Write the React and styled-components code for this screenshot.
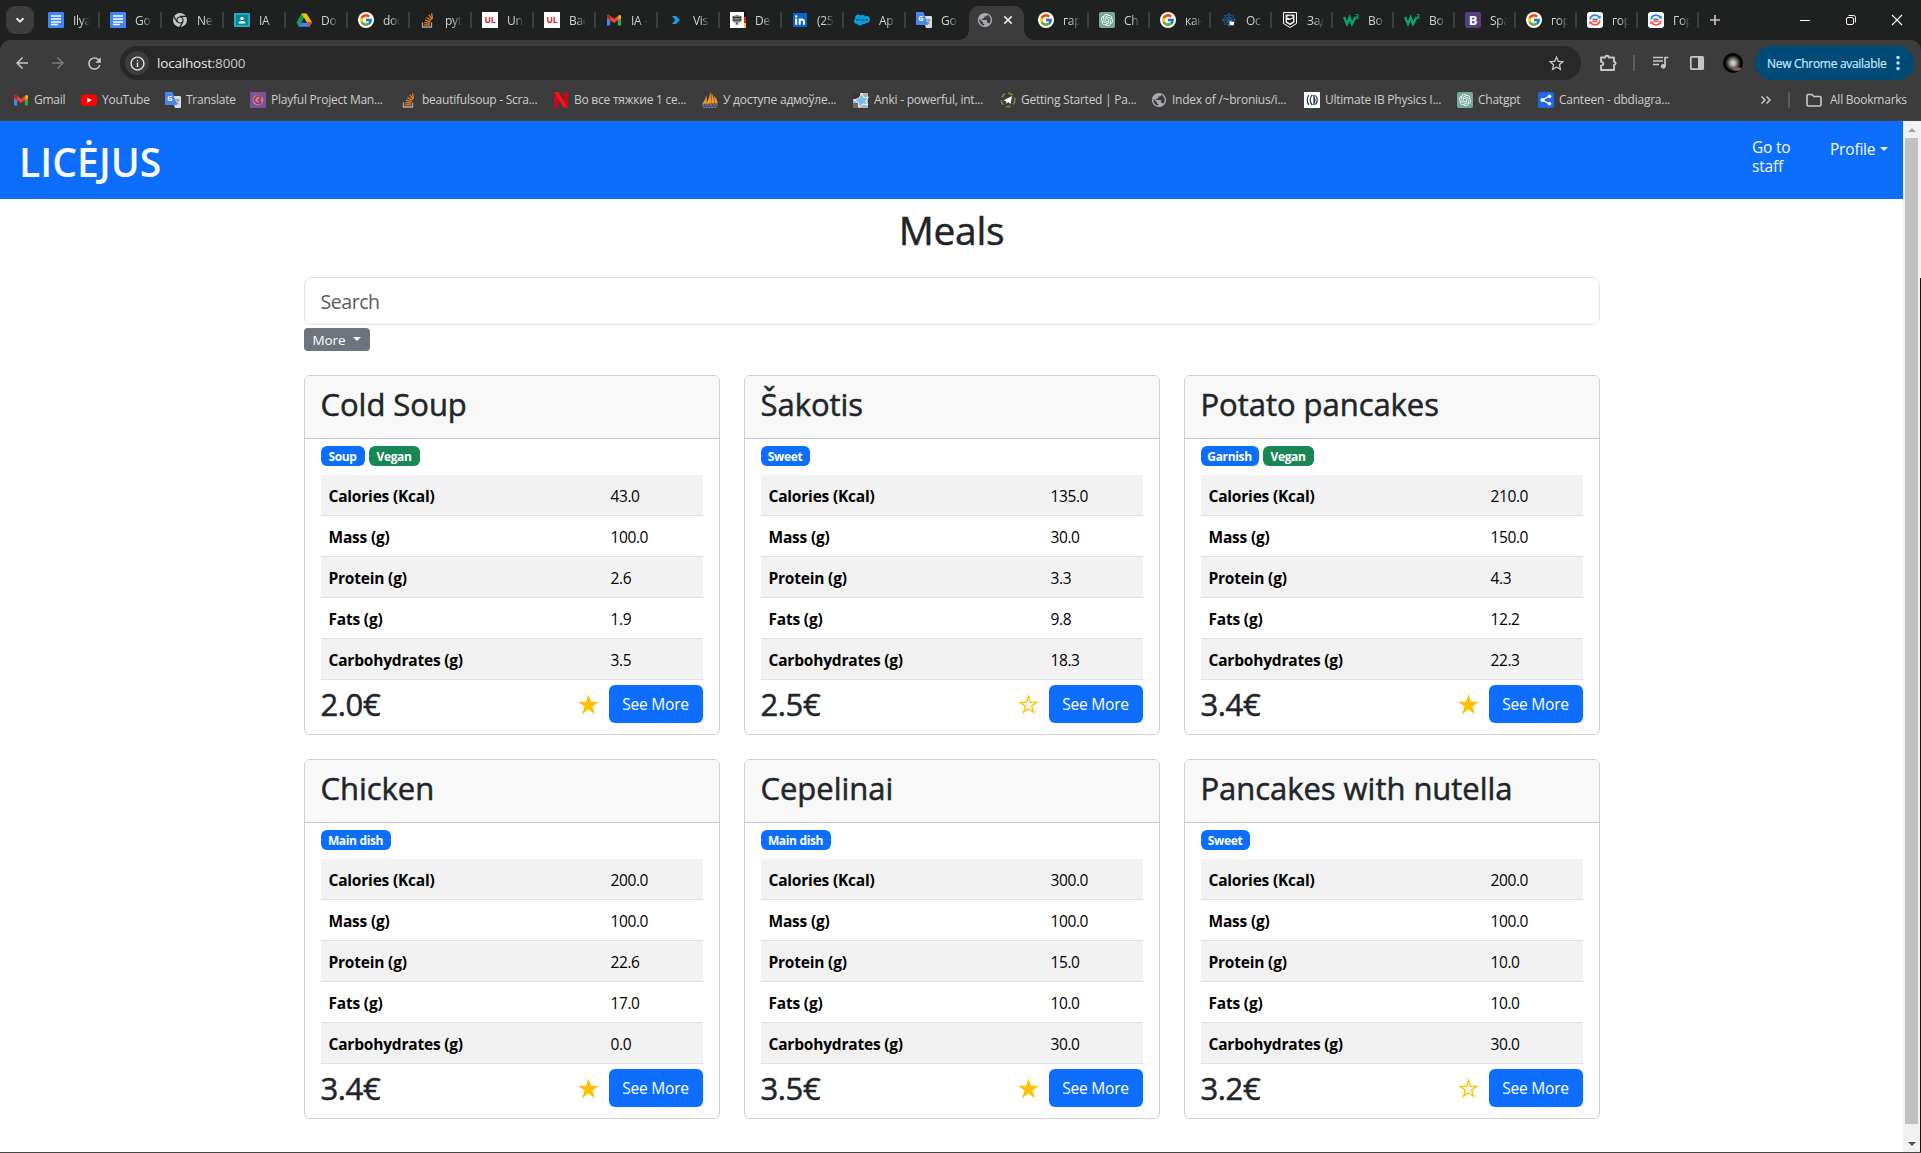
import React from "react";
import styled, { createGlobalStyle } from "styled-components";
import { FcGoogle } from "react-icons/fc";
import { FaSalesforce } from "react-icons/fa";
import {
  MdArrowBack, MdArrowForward, MdRefresh, MdInfoOutline, MdStarBorder, MdPublic,
} from "react-icons/md";
import { SiOpenai } from "react-icons/si";

const FONT = `"Segoe UI", "Open Sans", "Noto Sans", sans-serif`;
const BLUE = "#0d6efd";

const GlobalStyle = createGlobalStyle`
  * { box-sizing: border-box; }
  body { margin: 0; overflow: hidden; background: #fff; font-family: ${FONT}; }
  h1, h2, h3 { margin: 0; font-weight: 500; -webkit-text-stroke: 0.5px currentColor; }
  svg { display: block; flex: none; }
`;

/* ---------- browser window ---------- */

const Window = styled.div`
  width: 1921px;
  height: 1153px;
  display: flex;
  flex-direction: column;
  overflow: hidden;
  background: #1f2020;
`;

const TabStrip = styled.div`
  height: 40px;
  flex: none;
  display: flex;
  align-items: center;
  padding: 0 1px 0 6px;
  background: #1f2120;
`;

const TabSearch = styled.div`
  width: 28px;
  height: 28px;
  margin-right: 4px;
  border-radius: 9px;
  background: #3c3c3c;
  color: #e3e3e3;
  display: flex;
  align-items: center;
  justify-content: center;
`;

const TabItem = styled.div`
  width: ${(p) => p.$w}px;
  flex: none;
  height: 28px;
  padding-left: 10px;
  display: flex;
  align-items: center;
  justify-content: space-between;
`;

const TabLabel = styled.span`
  width: 17px;
  margin: 2px auto 0 9px;
  overflow: hidden;
  white-space: nowrap;
  font-size: 12px;
  line-height: 18px;
  letter-spacing: -0.3px;
  color: #d0d2d1;
  mask-image: linear-gradient(90deg, #000 45%, transparent 100%);
`;

const TabDivider = styled.i`
  width: 2px;
  height: 16px;
  background: ${(p) => (p.$hidden ? "transparent" : "#3d3e3e")};
`;

const ActiveTab = styled.div`
  position: relative;
  width: 55px;
  height: 34px;
  margin: 6px 4px 0 1px;
  flex: none;
  border-radius: 10px 10px 0 0;
  background: #3c3c3c;
  display: flex;
  align-items: center;
  padding: 0 0 6px 8px;
  gap: 9px;
  &::before, &::after {
    content: "";
    position: absolute;
    bottom: 0;
    width: 10px;
    height: 10px;
  }
  &::before { left: -10px; background: radial-gradient(circle at 0 0, transparent 9.5px, #3c3c3c 10px); }
  &::after { right: -10px; background: radial-gradient(circle at 100% 0, transparent 9.5px, #3c3c3c 10px); }
`;

const NewTab = styled.div`
  width: 32px;
  display: flex;
  justify-content: center;
`;

const WindowControls = styled.div`
  margin-left: auto;
  display: flex;
  > div { width: 46px; display: flex; justify-content: center; }
`;

const ToolbarFrame = styled.div`
  flex: none;
  height: 81px;
  border-radius: 10px 10px 0 0;
  border-bottom: 1px solid #474747;
  background: #3c3c3c;
`;

const Toolbar = styled.div`
  height: 46px;
  display: flex;
  align-items: center;
  padding-left: 4px;
`;

const ToolSlot = styled.div`
  width: 36px;
  height: 36px;
  flex: none;
  display: flex;
  align-items: center;
  justify-content: center;
  color: ${(p) => (p.$dim ? "#7b7b7b" : "#c7c7c7")};
`;

const Omnibox = styled.div`
  width: 1461px;
  height: 34px;
  flex: none;
  margin: 0 9px 0 8px;
  padding: 0 15px 0 5px;
  border-radius: 17px;
  background: #282828;
  display: flex;
  align-items: center;
`;

const SiteInfo = styled.div`
  width: 24px;
  height: 24px;
  border-radius: 50%;
  background: #3c3c3c;
  color: #e3e3e3;
  display: flex;
  align-items: center;
  justify-content: center;
`;

const Address = styled.div`
  margin: 0 auto 1px 8px;
  font-size: 13.5px;
  letter-spacing: -0.2px;
  color: #e8e8e8;
  span { color: #c7c7c7; }
`;

const VRule = styled.i`
  width: 2px;
  height: 16px;
  flex: none;
  margin: ${(p) => p.$m || 0};
  background: #5c5c5c;
`;

const Avatar = styled.div`
  width: 20px;
  height: 20px;
  border-radius: 50%;
  background:
    radial-gradient(ellipse 6px 2.5px at 14px 16px, #8d5f5c 50%, transparent 100%),
    radial-gradient(circle at 50% 50%, #c9c7bb 12%, #77756b 30%, #050505 55%);
`;

const UpdateButton = styled.div`
  width: 159px;
  height: 34px;
  margin-left: 4px;
  padding: 0 14px 0 12px;
  border-radius: 17px;
  background: #004a77;
  color: #c2e7ff;
  display: flex;
  align-items: center;
  justify-content: space-between;
  font-size: 12px;
  letter-spacing: -0.3px;
  white-space: nowrap;
  -webkit-text-stroke: 0.2px currentColor;
`;

const BookmarkBar = styled.div`
  height: 34px;
  display: flex;
  align-items: center;
  padding: 0 14px 6px 13px;
  color: #cdcdcd;
`;

const BookmarkItem = styled.div`
  width: ${(p) => p.$w}px;
  flex: none;
  display: flex;
  align-items: center;
  gap: 5px;
`;

const BookmarkLabel = styled.span`
  font-size: 12px;
  line-height: 18px;
  letter-spacing: -0.24px;
  white-space: nowrap;
`;

const BookmarkEnd = styled.div`
  margin-left: auto;
  display: flex;
  align-items: center;
`;

const AllBookmarks = styled(BookmarkLabel)`
  width: 77px;
  margin-left: 8px;
`;

/* ---------- page ---------- */

const Viewport = styled.div`
  flex: none;
  height: 1032px;
  display: flex;
  background: #fff;
  border-bottom: 1px solid #474747;
`;

const Page = styled.div`
  width: 1903px;
  flex: none;
`;

const ScrollTrack = styled.div`
  width: 17px;
  display: flex;
  flex-direction: column;
  align-items: center;
  background: #f1f1f1;
`;

const ScrollArrow = styled.div`
  height: 17px;
  display: flex;
  align-items: center;
  &::before {
    content: "";
    border: 4px solid transparent;
    border-${(p) => (p.$down ? "top" : "bottom")}-color: ${(p) => (p.$down ? "#505050" : "#a3a3a3")};
    border-${(p) => (p.$down ? "bottom" : "top")}-width: 0;
  }
`;

const ScrollThumb = styled.div`
  width: 13px;
  height: 986px;
  margin-bottom: auto;
  background: #c1c1c1;
`;

const WindowEdge = styled.div`
  width: 1px;
  background: linear-gradient(#f1f1f1 157px, #141414 157px);
`;

const NavBar = styled.nav`
  height: 78px;
  padding: 0 17px 0 19px;
  display: flex;
  align-items: flex-start;
  background: ${BLUE};
  color: #f8f9fa;
`;

const Brand = styled.div`
  margin: 10px auto 0 0;
  font-size: 39px;
  line-height: 61px;
  font-weight: 600;
  letter-spacing: 0.1px;
`;

const NavLink = styled.div`
  width: ${(p) => p.$w}px;
  padding-top: ${(p) => p.$top}px;
  display: flex;
  align-items: center;
  gap: 5px;
  font-size: 15.5px;
  line-height: 19px;
  letter-spacing: -0.2px;
`;

const Caret = styled.i`
  margin-bottom: 1px;
  border-top: 4px solid;
  border-left: 4px solid transparent;
  border-right: 4px solid transparent;
`;

const Container = styled.main`
  width: 1296px;
  margin: 0 auto;
`;

const PageTitle = styled.h1`
  padding-top: 7px;
  height: 78px;
  font-size: 39px;
  line-height: 48px;
  letter-spacing: -0.3px;
  color: #212529;
  text-align: center;
`;

const SearchBox = styled.div`
  height: 48px;
  padding: 0 16px;
  border: 1px solid #dee2e6;
  border-radius: 8px;
  font-size: 19.5px;
  line-height: 47px;
  letter-spacing: -0.45px;
  color: #595c5f;
`;

const MoreButton = styled.div`
  width: 66px;
  height: 23px;
  margin: 3px 0 24px;
  padding: 0 9px;
  border-radius: 4px;
  background: #6c757d;
  color: #fff;
  display: flex;
  align-items: center;
  justify-content: space-between;
  font-size: 13.5px;
  letter-spacing: -0.1px;
`;

const CardGrid = styled.div`
  display: grid;
  grid-template-columns: repeat(3, 416px);
  gap: 24px;
`;

const Card = styled.article`
  height: 360px;
  border: 1px solid #d0d1d2;
  border-radius: 6px;
  overflow: hidden;
`;

const CardHeader = styled.header`
  height: 63px;
  padding: 8px 16px;
  border-bottom: 1px solid #c8c9ca;
  background: #f8f8f8;
`;

const CardTitle = styled.h2`
  font-size: 31px;
  line-height: 40px;
  letter-spacing: -0.04px;
  color: #212529;
  white-space: nowrap;
`;

const CardBody = styled.div`
  padding: 7px 16px 0;
`;

const Badges = styled.div`
  display: flex;
  gap: 4px;
`;

const Badge = styled.span`
  height: 20px;
  width: ${(p) => p.$w}px;
  text-align: center;
  border-radius: 6px;
  background: ${(p) => (p.$green ? "#198754" : BLUE)};
  color: #fff;
  font-size: 12px;
  line-height: 21px;
  font-weight: 700;
  letter-spacing: -0.35px;
`;

const Facts = styled.div`
  margin-top: 9px;
`;

const FactRow = styled.div`
  height: 41px;
  padding: 0 8px;
  display: grid;
  grid-template-columns: 282px 1fr;
  border-bottom: 1px solid #dee2e6;
  background: ${(p) => (p.$striped ? "#f2f2f2" : "#fff")};
  font-size: 15.5px;
  line-height: 42px;
  letter-spacing: -0.4px;
  color: #000;
  b { font-weight: 700; letter-spacing: -0.2px; }
`;

const CardFooter = styled.footer`
  height: 48px;
  display: flex;
  align-items: center;
`;

const Price = styled.h3`
  margin: 1px auto 0 0;
  font-size: 31px;
  line-height: 39px;
  letter-spacing: -0.4px;
  color: #212529;
`;

const SeeMore = styled.div`
  width: 94px;
  height: 38px;
  margin-left: 10px;
  border-radius: 6px;
  background: ${BLUE};
  color: #fff;
  font-size: 15.5px;
  line-height: 39px;
  letter-spacing: -0.2px;
  text-align: center;
`;

/* ---------- drawings ---------- */

const Svg = ({ size = 16, children, ...rest }) => (
  <svg width={size} height={size} viewBox="0 0 16 16" fill="none" {...rest}>{children}</svg>
);

const LogoText = styled.text`
  font-family: ${FONT};
  font-weight: 700;
  text-anchor: middle;
`;

const Docs = () => (
  <Svg><rect width="16" height="16" rx="1.2" fill="#4285f4" /><path d="M3 4h10M3 7h10M3 10h10M3 12.6h7" stroke="#fff" strokeWidth="1.5" /></Svg>
);
const ChromeGrey = () => (
  <Svg><circle cx="8" cy="8" r="7" fill="#c4c7c5" /><path d="M8 4.400h7M4.900 9.800 1.600 4M11.100 9.800 7.600 15.400" stroke="#1f2120" strokeWidth="1.200" /><circle cx="8" cy="8" r="3.600" fill="#1f2120" /><circle cx="8" cy="8" r="2.500" fill="#c4c7c5" /></Svg>
);
const Classroom = () => (
  <Svg><rect y="1" width="16" height="14" rx="1" fill="#14b1c7" /><rect x="2" y="3" width="12" height="10" fill="#0b8499" /><circle cx="8" cy="6.400" r="1.700" fill="#fff" /><path d="M4.500 11.500c0-2 1.600-2.600 3.500-2.600s3.500.6 3.500 2.600z" fill="#fff" /></Svg>
);
const Drive = () => (
  <Svg><path d="M5.400 1.500h5.200L5.300 10.700 2.700 15 .6 10.500z" fill="#0f9d58" /><path d="M5.400 1.500h5.200L16 10.500h-5.200z" fill="#fbbc04" /><path d="M5.300 10.500H16L13.400 14.800H2.700z" fill="#4285f4" /><path d="M10.800 10.500H16L13.400 14.800z" fill="#ea4335" /><path d="m8 6 2.700 4.500H5.300z" fill="#1f2120" /></Svg>
);
const GoogleIcon = () => (
  <Svg><circle cx="8" cy="8" r="8" fill="#fff" /><FcGoogle x="1" y="1" size={14} /></Svg>
);
const StackIcon = () => (
  <Svg><path d="M2.500 10.500v4.500h9v-4.500" stroke="#a5a8aa" strokeWidth="1.300" /><path d="M4.200 12.900h5.700M4.300 10.600l5.700.6M5 8.100l5.400 1.600M6.500 5.400l4.700 2.900M8.900 2.800l3.200 4.600M11.600 1.300l.9 5.400" stroke="#f48024" strokeWidth="1.200" /></Svg>
);
const UL = () => (
  <Svg><rect width="16" height="16" fill="#fff" /><LogoText x="8" y="11" fontSize="8.500" fill="#d8232a">UL</LogoText></Svg>
);
const Gmail = () => (
  <Svg><path d="M1 4v9.500h3.200V7z" fill="#4285f4" /><path d="M15 4v9.500h-3.200V7z" fill="#34a853" /><path d="M11.800 4.500 13.300 3Q15 2.600 15 4.500v1.300l-3.200 2.500z" fill="#fbbc04" /><path d="M1 5.800V4.200Q1.200 2.300 3 3l5 3.800L13 3l-1.200 5.300L8 11 4.200 8.300z" fill="#ea4335" /><path d="M1 5.800V4.500Q1 2.700 2.700 2.900L4.200 4v4.300z" fill="#c5221f" /></Svg>
);
const BlueChevron = () => (
  <Svg><path d="M4 4h4l4 4-4 4H4l3.400-4z" fill="#11a4e8" /></Svg>
);
const Eagle = () => (
  <Svg><rect width="16" height="16" fill="#fff" /><path d="M7 3v9M3.200 4v5.500M5 3.500v7M9 3.500v7M10.800 4v5.500" stroke="#333" strokeWidth="1.200" /><path d="M3 5.500h8M3 8h8M5.500 12h3" stroke="#333" strokeWidth="1" /><path d="M14 0h2v5h-2z" fill="#111" /><path d="M14 5h2v6h-2z" fill="#e02020" /><path d="M14 11h2v5h-2z" fill="#f8ce1c" /></Svg>
);
const LinkedIn = () => (
  <Svg><rect x="1" y="1" width="14" height="14" rx="1" fill="#0a66c2" /><circle cx="4.200" cy="4.400" r="1.200" fill="#fff" /><path d="M4.200 6.500v6.300M7.700 6.500v6.300M7.700 9.500c0-2.800 4.200-2.800 4.200 0v3.300" stroke="#fff" strokeWidth="2" /></Svg>
);
const Translate = () => (
  <Svg><path d="M6 4h9q1 0 1 1v10q0 1-1 1h-5z" fill="#dadce0" /><path d="M9.500 8h5M12 6.800V8M13.500 8c-.5 2-2 3.500-3.500 4M10.800 9.500c.6 1.200 1.800 2 3 2.600" stroke="#6b7f99" strokeWidth=".9" /><path d="M1 0h6.500L12 13H1q-1 0-1-1V1q0-1 1-1z" fill="#4a86f0" /><LogoText x="4.700" y="9" fontSize="7" fill="#fff">G</LogoText></Svg>
);
const Globe = () => (
  <Svg><MdPublic x="-0.500" y="-0.500" size={17} color="#a4a9ae" /></Svg>
);
const Gpt = () => (
  <Svg><rect width="16" height="16" rx="2" fill="#75a99c" /><SiOpenai x="2" y="2" size={12} color="#fff" /></Svg>
);
const Web = () => (
  <Svg stroke="#1d5d93"><circle cx="8" cy="8" r="5.300" /><circle cx="8" cy="8" r="2.600" /><path d="M8 .5v15M.5 8h15M2.700 2.700l10.600 10.600M13.300 2.700 2.700 13.300" /><path d="M8.500 9l5 1-1 3.500-4-.5z" fill="#fff" stroke="none" /></Svg>
);
const Shield = () => (
  <Svg><path d="M1.500.5h13v11L8 15.500l-6.500-4z" fill="#1f2120" stroke="#fff" /><path d="M3.500 2.500h9v8L8 13.300l-4.500-2.800z" fill="#e8e8e8" /><path d="M4.500 5 8 3.500 11.500 5 8 6.500zM8 8l3-1.500v3L8 11.300 5 9.500V8" fill="#1f2120" /></Svg>
);
const W3 = () => (
  <Svg><path d="m1 5 3 7 2.600-6.500L9 12l3.600-7" stroke="#04aa6d" strokeWidth="2.300" /><LogoText x="14" y="6.500" fontSize="6.500" fill="#04aa6d">3</LogoText></Svg>
);
const Bootstrap = () => (
  <Svg><rect width="16" height="16" rx="2" fill="#563d7c" /><LogoText x="8" y="12.500" fontSize="13" fill="#fff">B</LogoText></Svg>
);
const Reverso = () => (
  <Svg><rect width="16" height="16" rx="3" fill="#fff" /><path d="M3 7.500Q4 3.200 8 3.200q3 0 4.300 2.300M5.500 7.300h5" stroke="#2b87e3" strokeWidth="1.800" /><path d="M13 8.500q-1 4.300-5 4.300-3 0-4.300-2.300M5.500 9.400h5" stroke="#ef5a4c" strokeWidth="1.800" /><path d="m10.500 6.200 3.500.6-.4-3.600z" fill="#2b87e3" /><path d="m5.500 9.800-3.500-.6.400 3.600z" fill="#ef5a4c" /></Svg>
);
const YouTube = () => (
  <Svg><rect x="0" y="2.500" width="16" height="11.500" rx="3" fill="#f00" /><path d="m6.300 5.800 4.500 2.500-4.500 2.500z" fill="#fff" /></Svg>
);
const Playful = () => (
  <Svg><rect width="16" height="16" fill="#7a52a0" /><circle cx="8" cy="8" r="5.300" fill="#7aaec0" /><path d="M11.500 5.500Q8 2.500 5.500 5.500t.6 5q2.500 2 5.400-.3M8 8l3.500-2M8 8l3.500 2" stroke="#e4213f" strokeWidth="1.900" /></Svg>
);
const Netflix = () => (
  <Svg><path d="M1 0h4.500v15.500L1 16zM10.500 0H15v16l-4.500-.5z" fill="#c4091a" /><path d="M1 0h4.500L15 16l-4.500-.5z" fill="#f5121d" /></Svg>
);
const Ship = () => (
  <Svg><path d="M4.500 3Q3.500 8 0 12l5-.5zM8.500 0Q7 7 4.500 11.700l5-.2zM9.500 1q3 5 2.500 10.500H9.700zM12 4q4 4 3.500 7.500H12.500z" fill="#f0962c" /><path d="M0 13h16M1 15.200h14" stroke="#7d78a8" strokeWidth="1.500" strokeDasharray="2 .7" /></Svg>
);
const Anki = () => (
  <Svg><path d="M0 1h15v15H0z" fill="#aeb4b8" /><path d="M0 1h7v6H0z" fill="#343638" /><path d="M0 11h5v5H0z" fill="#6b6e70" /><path d="m9 1 1.500 4.500L15.500 5l-3 4 2.500 4-5-1L6 15l-.5-4.500L1 8l5-2z" fill="#77bdf0" stroke="#fff" strokeWidth=".8" /></Svg>
);
const Plane = () => (
  <Svg><circle cx="8" cy="8" r="6.800" stroke="#9a7d32" strokeWidth="1.500" strokeDasharray="5 3" /><circle cx="8" cy="8" r="6.800" stroke="#4c8b4f" strokeWidth="1.500" strokeDasharray="2 6" /><path d="m3.500 8.500 8.500-4.500-1.500 8-2.500-2-1.500 2-.3-2.700z" fill="#fff" /></Svg>
);
const Physics = () => (
  <Svg><rect width="16" height="16" fill="#fff" /><path d="M5 3Q1.500 8 5 13M8 3Q4.500 8 8 13M9 3q4 5 0 10M11.500 3.500q3.500 4.500 0 9M10 3v10" stroke="#26364f" strokeWidth="1.200" /></Svg>
);
const DbDiagram = () => (
  <Svg><rect width="16" height="16" rx="2.500" fill="#2368e0" /><path d="M11.500 4 4.500 8l7 4" stroke="#fff" strokeWidth="1.300" /><circle cx="4.500" cy="8" r="2" fill="#fff" /><circle cx="11.500" cy="4.200" r="1.800" fill="#fff" /><circle cx="11.500" cy="11.800" r="1.800" fill="#fff" /></Svg>
);
const Cloud = () => <FaSalesforce size={16} color="#00a1e0" />;

const STAR = "M10.500 0 13 7.700H21L14.500 12.400 17 20.200 10.500 15.400 4 20.200 6.500 12.400 0 7.700H8Z";
const Star = ({ filled }) => (
  <svg width="21" height="21" viewBox="0 0 21 21">
    {filled
      ? <path d={STAR} fill="#ffc107" />
      : <path d="M10.500 2.200 12.400 8.400H18.900L13.700 12.100 15.700 18.400 10.500 14.500 5.300 18.400 7.300 12.100 2.100 8.400H8.600Z" fill="none" stroke="#ffc107" strokeWidth="1.350" />}
  </svg>
);

/* ---------- data ---------- */

const LEFT_TABS = [
  [Docs, "Ilya"], [Docs, "Go"], [ChromeGrey, "Ne"], [Classroom, "IA"], [Drive, "Do"],
  [GoogleIcon, "doc"], [StackIcon, "pyt"], [UL, "Un"], [UL, "Bac"], [Gmail, "IA -"],
  [BlueChevron, "Vis"], [Eagle, "De"], [LinkedIn, "(25"], [Cloud, "Ap"], [Translate, "Go"],
];

const RIGHT_TABS = [
  [GoogleIcon, "гар"], [Gpt, "Ch"], [GoogleIcon, "кан"], [Web, "Ос"], [Shield, "Зад"],
  [W3, "Bo"], [W3, "Bo"], [Bootstrap, "Spa"], [GoogleIcon, "гор"], [Reverso, "гор"], [Reverso, "Гор"],
];

const BOOKMARKS = [
  [Gmail, "Gmail", 68], [YouTube, "YouTube", 84], [Translate, "Translate", 85],
  [Playful, "Playful Project Man...", 151], [StackIcon, "beautifulsoup - Scra...", 152],
  [Netflix, "Во все тяжкие 1 се...", 149], [Ship, "У доступе адмоўле...", 151],
  [Anki, "Anki - powerful, int...", 147], [Plane, "Getting Started | Pa...", 151],
  [Globe, "Index of /~bronius/i...", 153], [Physics, "Ultimate IB Physics I...", 153],
  [Gpt, "Chatgpt", 81], [DbDiagram, "Canteen - dbdiagra...", 140],
];

const FACT_LABELS = ["Calories (Kcal)", "Mass (g)", "Protein (g)", "Fats (g)", "Carbohydrates (g)"];
const TAG_WIDTHS = { Soup: 44, Vegan: 51, Sweet: 49, Garnish: 58, "Main dish": 70 };

const MEALS = [
  { name: "Cold Soup", tags: ["Soup", "Vegan"], facts: ["43.0", "100.0", "2.6", "1.9", "3.5"], price: "2.0€", starred: true },
  { name: "Šakotis", tags: ["Sweet"], facts: ["135.0", "30.0", "3.3", "9.8", "18.3"], price: "2.5€", starred: false },
  { name: "Potato pancakes", tags: ["Garnish", "Vegan"], facts: ["210.0", "150.0", "4.3", "12.2", "22.3"], price: "3.4€", starred: true },
  { name: "Chicken", tags: ["Main dish"], facts: ["200.0", "100.0", "22.6", "17.0", "0.0"], price: "3.4€", starred: true },
  { name: "Cepelinai", tags: ["Main dish"], facts: ["300.0", "100.0", "15.0", "10.0", "30.0"], price: "3.5€", starred: true },
  { name: "Pancakes with nutella", tags: ["Sweet"], facts: ["200.0", "100.0", "10.0", "10.0", "30.0"], price: "3.2€", starred: false },
];

/* ---------- components ---------- */

const Tab = ({ icon: Icon, label, width, last }) => (
  <TabItem $w={width}>
    <Icon />
    <TabLabel>{label}</TabLabel>
    <TabDivider $hidden={last} />
  </TabItem>
);

const MealCard = ({ meal }) => (
  <Card>
    <CardHeader><CardTitle>{meal.name}</CardTitle></CardHeader>
    <CardBody>
      <Badges>
        {meal.tags.map((t) => <Badge key={t} $w={TAG_WIDTHS[t]} $green={t === "Vegan"}>{t}</Badge>)}
      </Badges>
      <Facts>
        {FACT_LABELS.map((label, i) => (
          <FactRow key={label} $striped={i % 2 === 0}><b>{label}</b><span>{meal.facts[i]}</span></FactRow>
        ))}
      </Facts>
      <CardFooter>
        <Price>{meal.price}</Price>
        <Star filled={meal.starred} />
        <SeeMore>See More</SeeMore>
      </CardFooter>
    </CardBody>
  </Card>
);

export default function App() {
  return (
    <Window>
      <GlobalStyle />
      <TabStrip>
        <TabSearch><Svg><path d="m4.500 6.200 3.500 3.500 3.500-3.500" stroke="#e3e3e3" strokeWidth="2" /></Svg></TabSearch>
        {LEFT_TABS.map(([icon, label], i) => (
          <Tab key={i} icon={icon} label={label} width={62} last={i === LEFT_TABS.length - 1} />
        ))}
        <ActiveTab>
          <Globe />
          <Svg size={12} viewBox="0 0 12 12"><path d="m2.300 2.300 7.400 7.400m0-7.400-7.400 7.400" stroke="#e3e3e3" strokeWidth="1.700" /></Svg>
        </ActiveTab>
        {RIGHT_TABS.map(([icon, label], i) => (
          <Tab key={i} icon={icon} label={label} width={61} />
        ))}
        <NewTab><Svg size={12} viewBox="0 0 12 12"><path d="M6 1v10M1 6h10" stroke="#c7c7c7" strokeWidth="1.600" /></Svg></NewTab>
        <WindowControls>
          <div><Svg size={12} viewBox="0 0 12 12"><path d="M1 6.500h10" stroke="#fff" /></Svg></div>
          <div><Svg size={12} viewBox="0 0 12 12"><rect x="1.500" y="3.500" width="7" height="7" rx="1.500" stroke="#fff" /><path d="M3.500 1.500H8.500q2 0 2 2v5" stroke="#fff" /></Svg></div>
          <div><Svg size={12} viewBox="0 0 12 12"><path d="m1 1 10 10M11 1 1 11" stroke="#fff" strokeWidth="1.100" /></Svg></div>
        </WindowControls>
      </TabStrip>

      <ToolbarFrame>
        <Toolbar>
          <ToolSlot><MdArrowBack size={18} /></ToolSlot>
          <ToolSlot $dim><MdArrowForward size={18} /></ToolSlot>
          <ToolSlot><MdRefresh size={19} /></ToolSlot>
          <Omnibox>
            <SiteInfo><MdInfoOutline size={17} /></SiteInfo>
            <Address>localhost<span>:8000</span></Address>
            <MdStarBorder size={19} color="#c7c7c7" />
          </Omnibox>
          <ToolSlot>
            <Svg size={18} viewBox="0 0 18 18"><path d="M2 3.500h4.200a1.800 1.800 0 0 1 3.600 0H15v4.200a1.600 1.600 0 0 1 0 3.200V16H2v-4.300q2.300-.3 2.300-2T2 7.700z" stroke="#c7c7c7" strokeWidth="1.900" strokeLinejoin="round" /></Svg>
          </ToolSlot>
          <VRule $m="0 8px 0 7px" />
          <ToolSlot>
            <Svg><path d="M0 2.500h10M0 6h10M0 9.500h6" stroke="#c7c7c7" strokeWidth="1.700" /><path d="M12 11V2.500h3.500" stroke="#c7c7c7" strokeWidth="1.700" /><circle cx="10.300" cy="11.300" r="2.400" fill="#c7c7c7" /></Svg>
          </ToolSlot>
          <ToolSlot>
            <Svg><rect x="1.800" y="1.800" width="12.400" height="12.400" rx="1" stroke="#c7c7c7" strokeWidth="1.700" /><path d="M9 2h5v12H9z" fill="#c7c7c7" /></Svg>
          </ToolSlot>
          <ToolSlot><Avatar /></ToolSlot>
          <UpdateButton>
            New Chrome available
            <Svg width={4} height={16} viewBox="0 0 4 16"><g fill="#c2e7ff"><circle cx="2" cy="2.500" r="1.700" /><circle cx="2" cy="8" r="1.700" /><circle cx="2" cy="13.500" r="1.700" /></g></Svg>
          </UpdateButton>
        </Toolbar>
        <BookmarkBar>
          {BOOKMARKS.map(([Icon, label, w]) => (
            <BookmarkItem key={label} $w={w}><Icon /><BookmarkLabel>{label}</BookmarkLabel></BookmarkItem>
          ))}
          <BookmarkEnd>
            <Svg size={12} viewBox="0 0 12 12"><path d="m1.500 2.500 3.500 3.500-3.500 3.500M6.500 2.500 10 6 6.500 9.500" stroke="#c7c7c7" strokeWidth="1.500" /></Svg>
            <VRule $m="0 16px 0 16px" />
            <Svg size={16}><path d="M1 3.500q0-1 1-1h4l2 2h6q1 0 1 1V13q0 1-1 1H2q-1 0-1-1z" stroke="#c7c7c7" strokeWidth="1.600" /></Svg>
            <AllBookmarks>All Bookmarks</AllBookmarks>
          </BookmarkEnd>
        </BookmarkBar>
      </ToolbarFrame>

      <Viewport>
        <Page>
          <NavBar>
            <Brand>LICĖJUS</Brand>
            <NavLink $w={78} $top={17}>Go to<br />staff</NavLink>
            <NavLink $w={56} $top={19}>Profile<Caret /></NavLink>
          </NavBar>
          <Container>
            <PageTitle>Meals</PageTitle>
            <SearchBox>Search</SearchBox>
            <MoreButton>More<Caret /></MoreButton>
            <CardGrid>
              {MEALS.map((m) => <MealCard key={m.name} meal={m} />)}
            </CardGrid>
          </Container>
        </Page>
        <ScrollTrack>
          <ScrollArrow />
          <ScrollThumb />
          <ScrollArrow $down />
        </ScrollTrack>
        <WindowEdge />
      </Viewport>
    </Window>
  );
}
